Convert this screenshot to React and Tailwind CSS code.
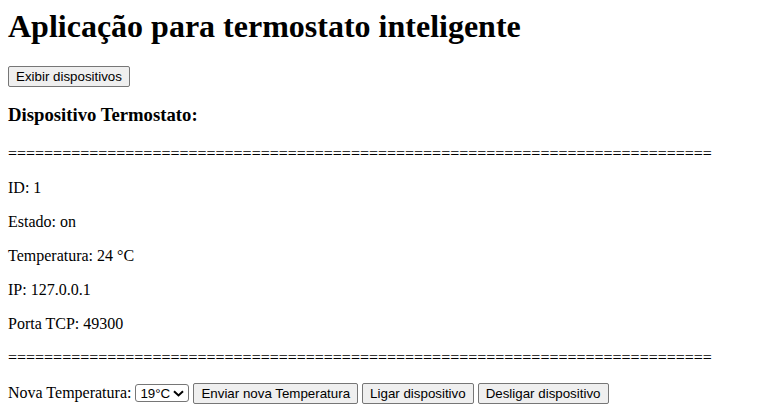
import React, { useState } from "react";

const EQUALS = "=".repeat(78);

const btn =
  "inline-block rounded-[2px] border border-[#767676] bg-[#efefef] px-[7px] py-[2px] align-baseline font-['Liberation_Sans',Arial,sans-serif] text-[13.33px] leading-[normal] text-black hover:bg-[#e5e5e5]";

const App = () => {
  const [temp, setTemp] = useState("19");
  const device = { id: 1, estado: "on", temperatura: 24, ip: "127.0.0.1", porta: 49300 };

  return (
    <div className="min-h-screen bg-white p-2 font-['Liberation_Serif','Times_New_Roman',serif] text-base leading-[normal] text-black">
      <h1 className="mb-[21px] text-[32px] font-bold leading-[normal]">
        Aplicação para termostato inteligente
      </h1>

      <div className="h-[19.5px]">
        <button className={btn}>Exibir dispositivos</button>
      </div>

      <h3 className="my-[18.72px] text-[18.72px] font-bold leading-[normal]">
        Dispositivo Termostato:
      </h3>

      <p className="my-4">{EQUALS}</p>
      <p className="my-4">ID: {device.id}</p>
      <p className="my-4">Estado: {device.estado}</p>
      <p className="my-4">Temperatura: {device.temperatura} °C</p>
      <p className="my-4">IP: {device.ip}</p>
      <p className="my-4">Porta TCP: {device.porta}</p>
      <p className="my-4">{EQUALS}</p>

      <div className="mt-[14px]">
        Nova Temperatura:{" "}
        <span className="relative inline-block align-baseline">
          <select
            value={temp}
            onChange={(e) => setTemp(e.target.value)}
            className="h-[18px] w-[54px] appearance-none rounded-[3px] border border-[#767676] bg-white pl-[4px] font-['Liberation_Sans',Arial,sans-serif] text-[13.33px] leading-[normal] text-black"
          >
            {[16, 17, 18, 19, 20, 21, 22, 23, 24, 25, 26].map((t) => (
              <option key={t} value={String(t)}>
                {t}°C
              </option>
            ))}
          </select>
          <svg
            className="pointer-events-none absolute right-[5px] top-[6px]"
            width="11"
            height="7"
            viewBox="0 0 11 7"
          >
            <path d="M1 1.2 L5.5 5.4 L10 1.2" fill="none" stroke="#000" strokeWidth="2" />
          </svg>
        </span>{" "}
        <button className={btn}>Enviar nova Temperatura</button>{" "}
        <button className={btn}>Ligar dispositivo</button>{" "}
        <button className={btn}>Desligar dispositivo</button>
      </div>
    </div>
  );
};

export default App;
